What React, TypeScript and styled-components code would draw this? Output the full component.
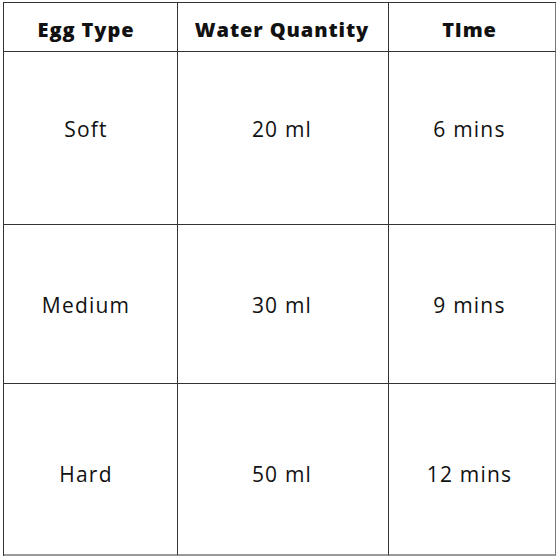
import React from "react";
import styled, { createGlobalStyle } from "styled-components";

const Global = createGlobalStyle`
  html, body { margin: 0; padding: 0; background: #ffffff; }
  body { font-family: "Open Sans", "Liberation Sans", sans-serif; color: #111; }
`;

const Table = styled.div`
  margin: 2px 0 0 3px;
  display: grid;
  grid-template-columns: 174px 211px 167px;
  grid-template-rows: 49px 173px 159px 172px;
  border-left: 1px solid #333;
  border-top: 1px solid #333;
  width: max-content;
`;

const Cell = styled.div<{ $shiftY: number; $shiftX: number; $head?: boolean; $last?: boolean; $bottom?: boolean }>`
  display: flex;
  align-items: center;
  justify-content: center;
  border-right: 1px solid ${(p) => (p.$last ? "#777" : "#333")};
  border-bottom: ${(p) => (p.$bottom ? "2px solid #999" : "1px solid #333")};
  box-sizing: border-box;
  padding-top: ${(p) => Math.max(0, p.$shiftY * 2)}px;
  padding-bottom: ${(p) => Math.max(0, -p.$shiftY * 2)}px;
  padding-right: ${(p) => Math.max(0, p.$shiftX * 2)}px;
  font-size: ${(p) => (p.$head ? "20px" : "21px")};
  font-weight: ${(p) => (p.$head ? 800 : 400)};
  letter-spacing: ${(p) => (p.$head ? "0.9px" : "1.2px")};
  color: #111;
  white-space: nowrap;
`;

const colShift = [4.5, 1, 2.5];
const rows: { y: number; head?: boolean; cells: string[] }[] = [
  { y: 2.5, head: true, cells: ["Egg Type", "Water Quantity", "TIme"] },
  { y: -9, cells: ["Soft", "20 ml", "6 mins"] },
  { y: 1, cells: ["Medium", "30 ml", "9 mins"] },
  { y: 4.5, cells: ["Hard", "50 ml", "12 mins"] },
];

export default function App() {
  return (
    <>
      <Global />
      <Table>
        {rows.map((r, ri) =>
          r.cells.map((c, ci) => (
            <Cell
              key={`${ri}-${ci}`}
              $shiftY={r.y}
              $shiftX={colShift[ci]}
              $head={r.head}
              $last={ci === 2}
              $bottom={ri === rows.length - 1}
            >
              {c}
            </Cell>
          ))
        )}
      </Table>
    </>
  );
}
